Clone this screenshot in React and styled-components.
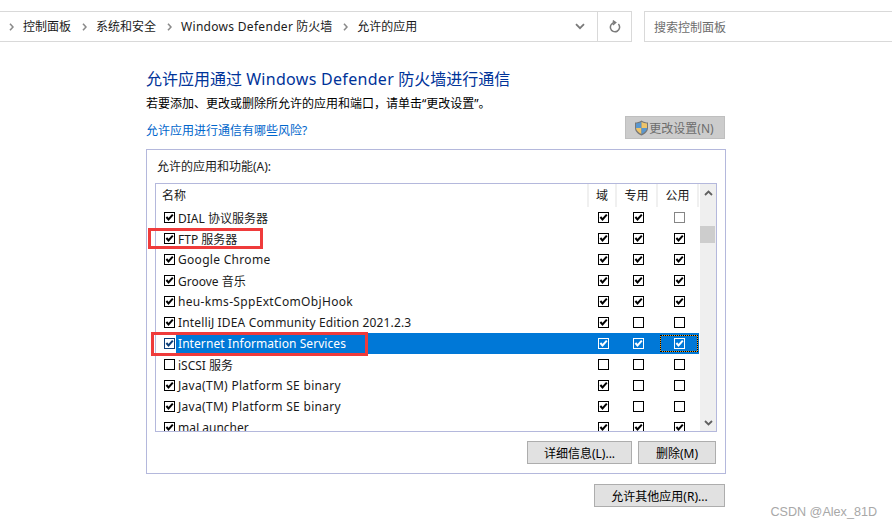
import React from 'react';
import styled, { createGlobalStyle } from 'styled-components';

const GlobalStyle = createGlobalStyle`
  html, body {
    margin: 0;
    background: #fff;
    height: 100%;
    overflow: hidden;
  }
  body {
    font-family: "Noto Sans", "Noto Sans CJK SC", sans-serif;
    font-size: 12px;
    color: #000;
  }
  * { box-sizing: border-box; }
`;

const Page = styled.div`
  position: relative;
  width: 892px;
  height: 528px;
  padding-top: 11px;
`;

const TopBar = styled.div`
  display: flex;
  height: 31px;
`;

const AddressBar = styled.div`
  display: flex;
  align-items: center;
  width: 632px;
  border: 1px solid #d9d9d9;
  border-left: none;
`;

const Crumbs = styled.div`
  flex: 1;
  display: flex;
  align-items: center;
  padding-left: 9px;
  color: #1a1a1a;
`;

const Crumb = styled.span`
  margin: 0 11px 0 9px;
  white-space: nowrap;
  line-height: 16px;
`;

const Latin = styled.span`
  letter-spacing: 0.3px;
`;

const BarButton = styled.div`
  display: flex;
  align-items: center;
  justify-content: center;
  height: 100%;
  width: ${p => p.$w}px;
  border-left: ${p => (p.$line ? '1px solid #d9d9d9' : 'none')};
`;

const SearchBox = styled.div`
  flex: 1;
  display: flex;
  align-items: center;
  margin-left: 12px;
  padding-left: 9px;
  border: 1px solid #d9d9d9;
  border-right: none;
  color: #6d6d6d;
`;

const Main = styled.main`
  width: 580px;
  margin-left: 146px;
  padding-top: 26px;
`;

const Title = styled.h1`
  margin: 0;
  font-size: 16px;
  font-weight: 400;
  line-height: 22px;
  color: #003399;
`;

const Intro = styled.p`
  margin: 5px 0 0;
  line-height: 18px;
`;

const ActionLine = styled.div`
  display: flex;
  justify-content: space-between;
  align-items: flex-start;
  margin-top: 3px;
  padding-right: 1px;
`;

const RiskLink = styled.a`
  margin-top: 6px;
  line-height: 18px;
  color: #0066cc;
`;

const Button = styled.button`
  display: flex;
  align-items: center;
  justify-content: center;
  width: ${p => p.$w}px;
  height: 23px;
  padding: 0 ${p => (p.disabled ? '2px' : '0')} 0 0;
  border: 1px solid ${p => (p.disabled ? '#bfbfbf' : '#adadad')};
  background: ${p => (p.disabled ? '#cccccc' : '#e1e1e1')};
  color: ${p => (p.disabled ? '#6d6d6d' : '#000')};
  font: inherit;
`;

const Group = styled.section`
  margin-top: 9px;
  height: 325px;
  padding: 8px 8px 0;
  border: 1px solid #b4b8dc;
`;

const GroupLabel = styled.div`
  padding-left: 2px;
  line-height: 17px;
  color: #1a1a1a;
`;

const ListBox = styled.div`
  display: flex;
  height: 249px;
  margin-top: 8px;
  border: 1px solid #b4b8dc;
  overflow: hidden;
`;

const ListBody = styled.div`
  flex: 1;
  min-width: 0;
`;

const HeaderRow = styled.div`
  display: grid;
  grid-template-columns: 1fr 28px 41px 41px;
  width: 543px;
  height: 23px;
  line-height: 22px;
`;

const HeaderCell = styled.div`
  padding-left: ${p => (p.$name ? '6px' : '0')};
  padding-top: 1px;
  text-align: ${p => (p.$name ? 'left' : 'center')};
  border-right: 2px solid #f0f0f0;
  color: #1a1a1a;
`;

const Row = styled.div`
  display: flex;
  align-items: center;
  width: 543px;
  height: 21px;
  padding-left: 8px;
`;

const RowBody = styled.div`
  flex: 1;
  display: grid;
  grid-template-columns: 1fr 28px 41px 41px;
  align-items: center;
  height: 100%;
  margin-left: 1px;
  padding-left: 2px;
  background: ${p => (p.$selected ? '#0078d7' : 'transparent')};
  color: ${p => (p.$selected ? '#fff' : '#1a1a1a')};
`;

const RowName = styled.div`
  white-space: nowrap;
  letter-spacing: ${p => p.$track || 0}px;
`;

const Cell = styled.div`
  display: flex;
  justify-content: center;
  align-items: center;
  height: 17px;
  margin: 0 1px 0 2px;
  border: 1px ${p => (p.$focus ? 'dotted #000' : 'solid transparent')};
  background: ${p =>
    p.$focus
      ? 'linear-gradient(#0078d7, #0078d7) padding-box, linear-gradient(#f0a020, #f0a020) border-box'
      : 'none'};
`;

const Box = styled.span`
  display: flex;
  flex: none;
  width: 11px;
  height: 11px;
  border: 1px solid ${p => p.$color};
`;

const ScrollTrack = styled.div`
  flex: none;
  display: flex;
  flex-direction: column;
  width: 16px;
  height: 100%;
  background: #efefef;
`;

const ScrollArrow = styled.div`
  display: flex;
  align-items: center;
  justify-content: center;
  height: 17px;
`;

const ScrollThumb = styled.div`
  width: 15px;
  height: 17px;
  margin-top: 25px;
  background: #cdcdcd;
`;

const ScrollFill = styled.div`
  flex: 1;
`;

const ButtonLine = styled.div`
  display: flex;
  justify-content: flex-end;
  gap: 6px;
  margin-top: 9px;
  padding-right: 1px;
`;

const FootLine = styled.div`
  display: flex;
  justify-content: flex-end;
  margin-top: 10px;
  padding-right: 1px;
`;

const Watermark = styled.div`
  position: absolute;
  right: 15px;
  top: 504px;
  font-family: "Liberation Sans", sans-serif;
  font-size: 12.6px;
  line-height: 16px;
  color: #a8a8a8;
`;

const Highlight = styled.div`
  position: absolute;
  left: ${p => p.$x}px;
  top: ${p => p.$y}px;
  width: ${p => p.$w}px;
  height: ${p => p.$h}px;
  border: 3px solid #ef3b3b;
`;

const apps = [
  { name: 'DIAL 协议服务器', on: 1, cols: [1, 1, 0], muted: true },
  { name: 'FTP 服务器', on: 1, cols: [1, 1, 1] },
  { name: 'Google Chrome', on: 1, cols: [1, 1, 1], track: 0.3 },
  { name: 'Groove 音乐', on: 1, cols: [1, 1, 1] },
  { name: 'heu-kms-SppExtComObjHook', on: 1, cols: [1, 1, 1], track: 0.33 },
  { name: 'IntelliJ IDEA Community Edition 2021.2.3', on: 1, cols: [1, 0, 0], track: 0.15 },
  { name: 'Internet Information Services', on: 1, cols: [1, 1, 1], selected: true, track: 0.07 },
  { name: 'iSCSI 服务', on: 0, cols: [0, 0, 0] },
  { name: 'Java(TM) Platform SE binary', on: 1, cols: [1, 0, 0], track: 0.3 },
  { name: 'Java(TM) Platform SE binary', on: 1, cols: [1, 0, 0], track: 0.3 },
  { name: 'maLauncher', on: 1, cols: [1, 1, 1] },
];

const crumbs = [
  '控制面板',
  '系统和安全',
  <><Latin>Windows Defender</Latin> 防火墙</>,
  '允许的应用',
];

function CrumbArrow() {
  return (
    <svg width="5" height="8" viewBox="0 0 5 8" fill="none" stroke="#8a8a8a" strokeWidth="1.6">
      <path d="M1 .8 4 4 1 7.2" />
    </svg>
  );
}

function Check({ color = '#000', on }) {
  return (
    <Box $color={color}>
      {on ? (
        <svg width="9" height="9" viewBox="0 0 9 9" fill="none" stroke={color} strokeWidth="2">
          <path d="M1.400 4 3.500 6.400 7.800 1.600" />
        </svg>
      ) : null}
    </Box>
  );
}

function Shield() {
  return (
    <svg width="15" height="16" viewBox="0 0 15 16">
      <path d="M7.500.5C5.500 2 3 2.500 1 2.500V8c0 3.500 3 6 6.500 7.500C11 14 14 11.500 14 8V2.500C12 2.500 9.500 2 7.500.5Z" fill="#777" />
      <path d="M7.500 1.800V8H2V3.500C4 3.400 6 3 7.500 1.800Z" fill="#5a97cf" />
      <path d="M7.500 1.800C9 3 11 3.400 13 3.500V8H7.500Z" fill="#eec46a" />
      <path d="M2 8h5.500v6C4.800 12.800 2.200 10.800 2 8Z" fill="#eec46a" />
      <path d="M7.500 8H13c-.2 2.800-2.800 4.800-5.500 6Z" fill="#5a97cf" />
    </svg>
  );
}

export default function App() {
  return (
    <Page>
      <GlobalStyle />
      <TopBar>
        <AddressBar>
          <Crumbs>
            {crumbs.map((text, i) => (
              <React.Fragment key={i}>
                <CrumbArrow />
                <Crumb>{text}</Crumb>
              </React.Fragment>
            ))}
          </Crumbs>
          <BarButton $w={34}>
            <svg width="10" height="7" viewBox="0 0 10 7" fill="none" stroke="#7a7a7a" strokeWidth="1.800">
              <path d="M1 1.200 5 5.200 9 1.200" />
            </svg>
          </BarButton>
          <BarButton $w={34} $line>
            <svg width="12" height="13" viewBox="0 0 12 13" fill="none" stroke="#7a7a7a" strokeWidth="1.500">
              <path d="M9.400 4.100A4.600 4.600 0 1 1 6 2.600" />
              <path d="M3.800.6 6.600 2.600 3.800 4.800" />
            </svg>
          </BarButton>
        </AddressBar>
        <SearchBox>搜索控制面板</SearchBox>
      </TopBar>
      <Main>
        <Title>允许应用通过 <Latin>Windows Defender</Latin> 防火墙进行通信</Title>
        <Intro>若要添加、更改或删除所允许的应用和端口，请单击“更改设置”。</Intro>
        <ActionLine>
          <RiskLink>允许应用进行通信有哪些风险?</RiskLink>
          <Button disabled $w={100}>
            <Shield />
            更改设置(N)
          </Button>
        </ActionLine>
        <Group>
          <GroupLabel>允许的应用和功能(A):</GroupLabel>
          <ListBox>
            <ListBody>
              <HeaderRow>
                <HeaderCell $name>名称</HeaderCell>
                <HeaderCell>域</HeaderCell>
                <HeaderCell>专用</HeaderCell>
                <HeaderCell>公用</HeaderCell>
              </HeaderRow>
              {apps.map((app, i) => (
                <Row key={i}>
                  <Check on={app.on} color={app.selected ? '#0b3d78' : '#000'} />
                  <RowBody $selected={app.selected}>
                    <RowName $track={app.track}>{app.name}</RowName>
                    {app.cols.map((c, j) => (
                      <Cell key={j} $focus={app.selected && j === 2}>
                        <Check
                          on={c}
                          color={app.selected ? '#fff' : app.muted && !c ? '#858585' : '#000'}
                        />
                      </Cell>
                    ))}
                  </RowBody>
                </Row>
              ))}
            </ListBody>
            <ScrollTrack>
              <ScrollArrow>
                <svg width="9" height="6" viewBox="0 0 9 6" fill="none" stroke="#606060" strokeWidth="1.800">
                  <path d="M1 5 4.500 1.500 8 5" />
                </svg>
              </ScrollArrow>
              <ScrollThumb />
              <ScrollFill />
              <ScrollArrow>
                <svg width="9" height="6" viewBox="0 0 9 6" fill="none" stroke="#606060" strokeWidth="1.800">
                  <path d="M1 1 4.500 4.500 8 1" />
                </svg>
              </ScrollArrow>
            </ScrollTrack>
          </ListBox>
          <ButtonLine>
            <Button $w={105}>详细信息(L)...</Button>
            <Button $w={78}>删除(M)</Button>
          </ButtonLine>
        </Group>
        <FootLine>
          <Button $w={131}>允许其他应用(R)...</Button>
        </FootLine>
      </Main>
      <Highlight $x={148} $y={228} $w={115} $h={21} />
      <Highlight $x={151} $y={332} $w={217} $h={24} />
      <Watermark>CSDN @Alex_81D</Watermark>
    </Page>
  );
}
